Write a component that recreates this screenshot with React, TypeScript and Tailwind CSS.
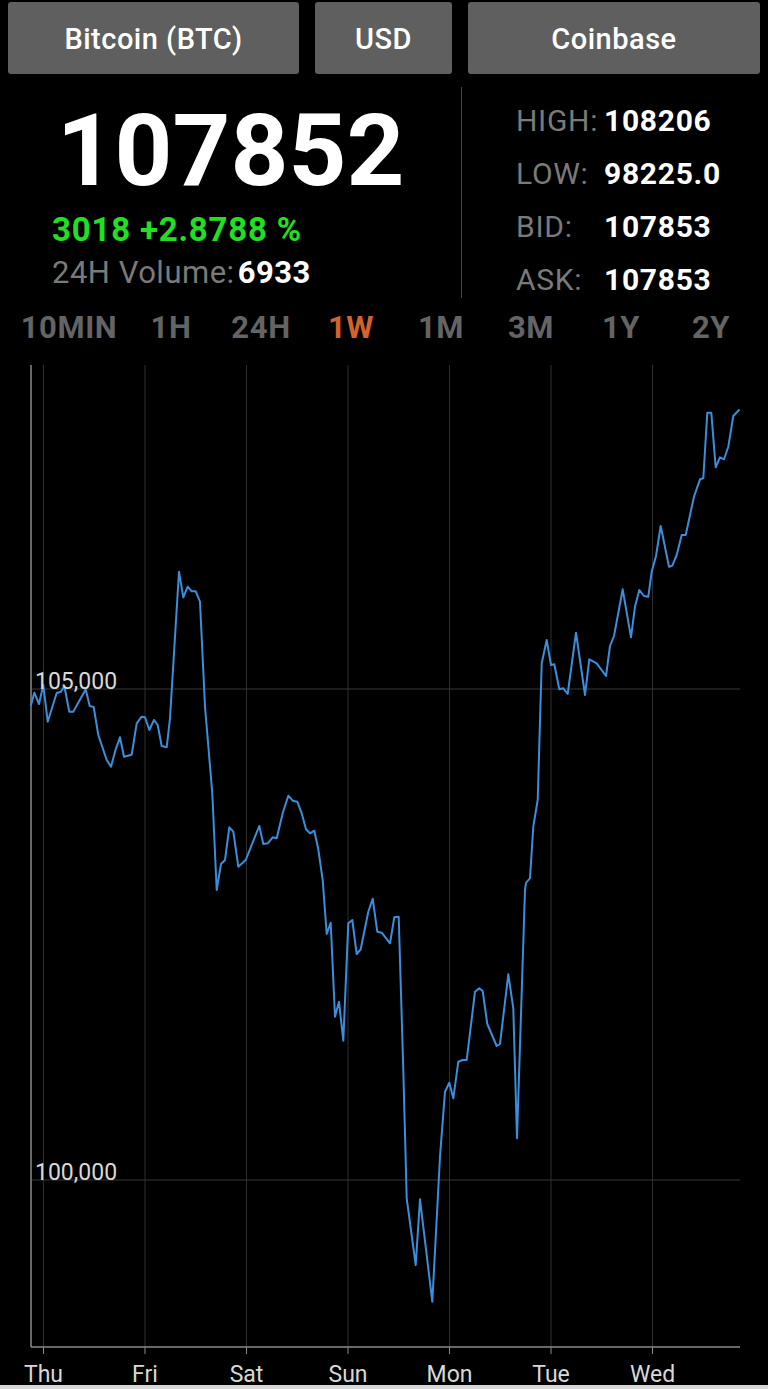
import React from "react";

const pts: [number, number][] = [
  [31, 705], [34.3, 692.7], [39, 704], [43.3, 685], [47.7, 721.7], [56.7, 693], [61, 691.7], [64.3, 686],
  [69.3, 711.7], [73.3, 711.7], [85.7, 689.3], [89.7, 706], [93.7, 707], [98.3, 735], [106.7, 760], [111, 766.7],
  [115.7, 749.3], [120, 737.3], [124, 756.7], [131.7, 754.7], [136.7, 723.3], [141.7, 716.7], [145, 717.3],
  [149.3, 730], [154, 720], [157.7, 725], [161.7, 746], [166.7, 747.3], [170, 718.3], [179, 571.7], [183.3, 597.3],
  [187.7, 586.7], [191.7, 591.3], [195.7, 591.3], [200, 601.7], [205, 706.7], [212.3, 793.3], [216.7, 890],
  [221, 864], [225, 860], [229.3, 827.3], [233.3, 831.7], [238.3, 866.7], [245.7, 860], [259.3, 826], [263.3, 844],
  [267.7, 843.3], [272.7, 837.3], [276.7, 838.3], [282.7, 813.3], [288.3, 795.7], [292.7, 800.7], [297.3, 801.7],
  [301.7, 813.3], [306, 829.3], [310, 833.3], [314.3, 830.7], [318.3, 849.3], [322.7, 880], [326.7, 934],
  [330.7, 922.7], [335, 1016.7], [339, 1001.7], [343.3, 1040.7], [348.3, 923.3], [352.3, 920], [356.7, 954],
  [360.7, 949.3], [368.3, 911.7], [372.7, 898.7], [377.3, 931.7], [381.7, 932.7], [390, 943.3], [394.3, 917.3],
  [398.7, 916.7], [403.3, 1070], [406.7, 1198.3], [415.7, 1265], [420, 1199.3], [432.3, 1301.7], [440, 1156.7],
  [445, 1091.7], [449.3, 1082.7], [453.3, 1098.3], [458.3, 1061.7], [462.7, 1060], [466.7, 1060], [475, 991.7],
  [479.3, 988.3], [482.7, 991], [487.3, 1024], [496.7, 1046], [500, 1044], [508.3, 974.3], [513.3, 1008.3],
  [517, 1138.3], [525, 890], [526, 883], [530, 878], [533.3, 826.7], [537.7, 800], [541.7, 663.3], [546.7, 640],
  [551, 665], [554.3, 664.3], [559.3, 689.3], [563.3, 688.3], [567.7, 694], [576, 632.7], [585, 695],
  [589.3, 659.3], [596.7, 663.3], [606, 676], [610, 646], [614, 636], [622.7, 589.3], [631, 637.3], [635, 606.7],
  [639.3, 590], [644, 596], [648.3, 596.7], [651.7, 571.7], [656, 556], [660.7, 526], [669, 566.7], [672.3, 565.7],
  [676.7, 555], [681.7, 535], [685.7, 535], [694, 496.7], [700, 479.3], [703.3, 478.3], [707.3, 412.7],
  [711.3, 412.7], [715.7, 467.3], [720, 457.3], [724, 459.3], [728.3, 446.7], [733.3, 416], [739, 410],
];

const days: [string, number][] = [
  ["Thu", 43.5], ["Fri", 145], ["Sat", 246.5], ["Sun", 348], ["Mon", 449.5], ["Tue", 551], ["Wed", 652.5],
];

const tabs = ["1H", "24H", "1W", "1M", "3M", "1Y", "2Y"];

const stats: [string, string][] = [
  ["HIGH:", "108206"],
  ["LOW:", "98225.0"],
  ["BID:", "107853"],
  ["ASK:", "107853"],
];

function Chart() {
  const top = 365;
  const bottom = 1347;
  return (
    <svg width={768} height={1037} viewBox="0 352 768 1037" className="block">
      {days.map(([d, x]) => (
        <line key={d} x1={x} x2={x} y1={top} y2={bottom} stroke="#2e2e2e" strokeWidth={1} />
      ))}
      <line x1={31} x2={740} y1={689} y2={689} stroke="#383838" strokeWidth={1} />
      <line x1={31} x2={740} y1={1180} y2={1180} stroke="#383838" strokeWidth={1} />
      <line x1={31} x2={31} y1={top} y2={bottom} stroke="#8a8a8a" strokeWidth={1.5} />
      <line x1={31} x2={740} y1={bottom} y2={bottom} stroke="#8a8a8a" strokeWidth={1.5} />
      {days.map(([d, x]) => (
        <line key={"t" + d} x1={x} x2={x} y1={bottom} y2={bottom + 7} stroke="#8a8a8a" strokeWidth={1} />
      ))}
      <polyline
        points={pts.map((p) => p.join(",")).join(" ")}
        fill="none"
        stroke="#3b8edb"
        strokeWidth={2}
        strokeLinejoin="round"
        strokeLinecap="round"
      />
      <text x={35} y={688.5} fill="#d8d8d8" fontSize={23} fontFamily="Roboto, sans-serif">
        105,000
      </text>
      <text x={35} y={1179.5} fill="#d8d8d8" fontSize={23} fontFamily="Roboto, sans-serif">
        100,000
      </text>
      {days.map(([d, x]) => (
        <text key={"l" + d} x={x} y={1381.5} fill="#d8d8d8" fontSize={23} textAnchor="middle" fontFamily="Roboto, sans-serif">
          {d}
        </text>
      ))}
      <rect x={0} y={1385} width={768} height={4} fill="#d8d8d8" />
    </svg>
  );
}

export default function App() {
  return (
    <div className="w-[768px] h-[1389px] bg-black overflow-hidden font-['Roboto',sans-serif]">
      {/* Top buttons */}
      <div className="h-[74px] pt-[2px] px-[8px] flex gap-[16px]">
        <div className="w-[291px] h-[72px] pt-[3px] rounded-[3px] bg-[#5f5f5f] flex items-center justify-center text-white text-[29px] leading-[29px] tracking-[0.5px] font-medium">
          Bitcoin (BTC)
        </div>
        <div className="w-[137px] h-[72px] pt-[3px] rounded-[3px] bg-[#5f5f5f] flex items-center justify-center text-white text-[29px] leading-[29px] tracking-[0.5px] font-medium">
          USD
        </div>
        <div className="flex-1 h-[72px] pt-[3px] rounded-[3px] bg-[#5f5f5f] flex items-center justify-center text-white text-[29px] leading-[29px] tracking-[0.5px] font-medium">
          Coinbase
        </div>
      </div>

      {/* Info section */}
      <div className="h-[228px] flex">
        <div className="w-[461px] flex flex-col">
          <div className="mt-[26px] text-center text-white font-bold text-[101px] leading-[101px]">107852</div>
          <div className="mt-[9px] pl-[52px] text-[#21e021] font-bold text-[33px] leading-[40px] tracking-[0.8px]">
            3018 +2.8788 %
          </div>
          <div className="mt-[5px] pl-[52px] text-[31px] leading-[36px] tracking-[0.5px] flex">
            <span className="text-[#7a7a7a]">24H Volume:</span>
            <span className="text-white font-bold ml-[3px]">6933</span>
          </div>
        </div>
        <div className="w-[1px] mt-[13px] h-[211px] bg-[#444444]" />
        <div className="flex-1 pt-[20px] pl-[54px]">
          {stats.map(([l, v]) => (
            <div key={l} className="h-[53px] flex text-[30px] leading-[53px] tracking-[0.7px]">
              <span className="w-[88px] text-[#7a7a7a]">{l}</span>
              <span className="text-white font-bold">{v}</span>
            </div>
          ))}
        </div>
      </div>

      {/* Tabs */}
      <div className="h-[50px] pt-[2px] flex text-[31px] leading-[48px] tracking-[0.6px] font-bold text-[#646464]">
        <div className="ml-[12px] w-[114px] text-center">10MIN</div>
        {tabs.map((t) => (
          <div key={t} className={"w-[90px] text-center " + (t === "1W" ? "text-[#d4622b]" : "")}>
            {t}
          </div>
        ))}
      </div>

      {/* Chart */}
      <Chart />
    </div>
  );
}
